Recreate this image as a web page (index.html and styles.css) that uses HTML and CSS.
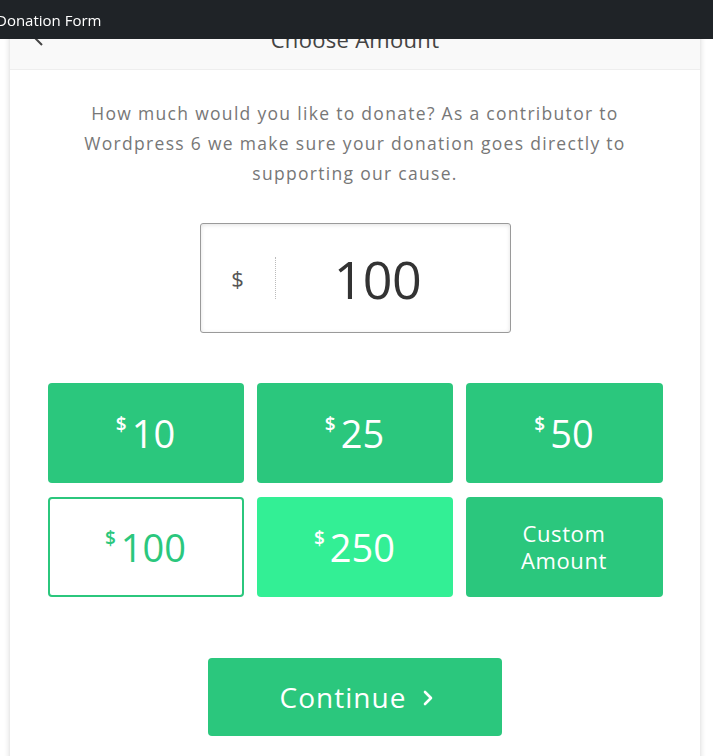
FILE: index.html
```html
<!DOCTYPE html>
<html>
<head>
<meta charset="utf-8">
<link rel="stylesheet" href="styles.css">
</head>
<body>
<div class="topbar"><span class="topbar-title">Donation Form</span></div>
<div class="card">
  <div class="card-head">
    <span class="back">
      <svg width="10" height="16" viewBox="0 0 10 16"><path d="M8 2 L2 8 L8 14" fill="none" stroke="#444" stroke-width="2"/></svg>
    </span>
    <span class="head-title">Choose Amount</span>
  </div>
  <div class="card-body">
    <p class="intro">How much would you like to donate? As a contributor to Wordpress 6 we make sure your donation goes directly to supporting our cause.</p>
    <div class="amount-box">
      <span class="amount-cur">$</span>
      <span class="amount-sep"></span>
      <span class="amount-val">100</span>
    </div>
    <div class="levels">
      <button class="level"><span class="cur">$</span><span class="num">10</span></button>
      <button class="level"><span class="cur">$</span><span class="num">25</span></button>
      <button class="level"><span class="cur">$</span><span class="num">50</span></button>
      <button class="level selected"><span class="cur">$</span><span class="num">100</span></button>
      <button class="level hover"><span class="cur">$</span><span class="num">250</span></button>
      <button class="level custom"><span class="custom-text">Custom<br>Amount</span></button>
    </div>
    <div class="actions">
      <button class="continue">Continue
        <svg class="chev" width="12" height="18" viewBox="0 0 12 18"><path d="M3 3 L9 9 L3 15" fill="none" stroke="#fff" stroke-width="2.6" stroke-linecap="round" stroke-linejoin="round"/></svg>
      </button>
    </div>
  </div>
</div>
</body>
</html>
```
FILE: styles.css
```css
html, body {
  margin: 0;
  padding: 0;
  background: #ffffff;
}
body {
  font-family: "Open Sans", "Noto Sans", sans-serif;
  overflow: hidden;
  height: 756px;
}
.topbar {
  position: fixed;
  top: 0;
  left: 0;
  right: 0;
  height: 39px;
  background: #1f2327;
  z-index: 10;
  display: flex;
  align-items: center;
}
.topbar-title {
  color: #ffffff;
  font-family: "Open Sans", sans-serif;
  font-size: 15px;
  margin-left: -4px;
  margin-top: 1px;
}
.card {
  margin: 6px 0 0 10px;
  width: 690px;
  min-height: 800px;
  background: #ffffff;
  box-shadow: 0 0 6px rgba(0, 0, 0, 0.18);
}
.card-head {
  height: 63px;
  background: #f9f9f9;
  border-bottom: 1px solid #eeeeee;
  display: flex;
  align-items: center;
  justify-content: center;
  position: relative;
}
.back {
  position: absolute;
  left: 24px;
  top: 24px;
}
.head-title {
  font-size: 22px;
  color: #444;
  margin-top: 2px;
  letter-spacing: 0.3px;
}
.card-body {
  display: flex;
  flex-direction: column;
  align-items: center;
  padding-top: 28px;
}
.intro {
  margin: 0;
  width: 566px;
  text-align: center;
  color: #777777;
  font-size: 17.5px;
  line-height: 30px;
  letter-spacing: 1.3px;
}
.amount-box {
  margin-top: 35px;
  width: 309px;
  height: 108px;
  border: 1px solid #9a9a9a;
  border-radius: 3px;
  box-shadow: inset 0 1px 4px rgba(0, 0, 0, 0.12);
  display: flex;
  align-items: center;
}
.amount-cur {
  width: 74px;
  text-align: center;
  color: #555;
  font-size: 22px;
}
.amount-sep {
  width: 0;
  height: 42px;
  border-left: 1px dotted #bbb;
}
.amount-val {
  flex: 1;
  text-align: center;
  font-size: 52px;
  color: #333;
  margin-right: 30px;
  letter-spacing: -0.5px;
}
.levels {
  margin-top: 50px;
  display: grid;
  grid-template-columns: 196px 196px 197px;
  column-gap: 13px;
  row-gap: 14px;
}
.level {
  height: 100px;
  border: none;
  border-radius: 4px;
  background: #2bc77d;
  color: #ffffff;
  font-family: "Open Sans", sans-serif;
  display: flex;
  align-items: center;
  justify-content: center;
  padding: 0;
  cursor: pointer;
}
.level .cur {
  font-size: 19px;
  font-weight: 600;
  margin-top: -18px;
  margin-right: 5px;
}
.level .num {
  font-size: 38px;
  letter-spacing: 0;
}
.level.selected {
  background: #ffffff;
  border: 2px solid #2bc77d;
  color: #2bc77d;
}
.level.hover {
  background: #33ef95;
}
.custom-text {
  font-size: 22px;
  line-height: 27px;
  letter-spacing: 0.6px;
}
.actions {
  margin-top: 61px;
}
.continue {
  width: 294px;
  height: 78px;
  border: none;
  border-radius: 4px;
  background: #2bc77d;
  color: #ffffff;
  font-family: "Open Sans", sans-serif;
  font-size: 28px;
  letter-spacing: 1px;
  display: flex;
  align-items: center;
  justify-content: center;
  gap: 16px;
  padding: 0 0 0 4px;
}
.chev {
  margin-top: 2px;
}
```
